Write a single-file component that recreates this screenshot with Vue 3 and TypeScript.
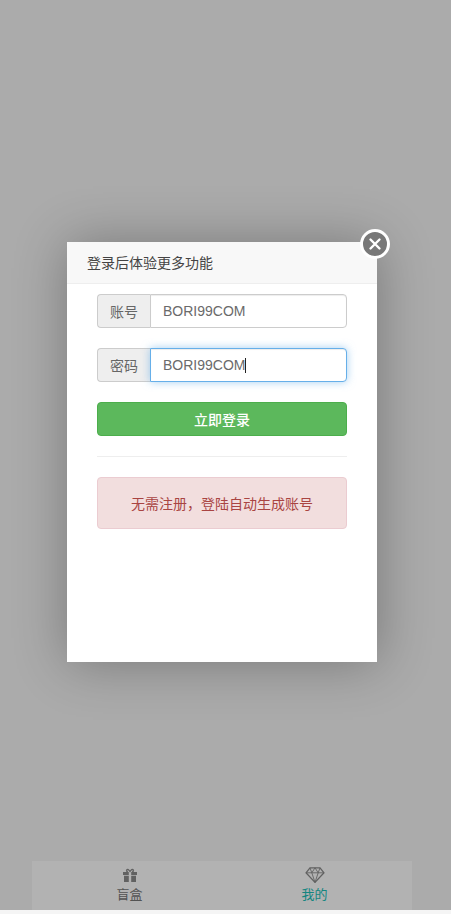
<script setup lang="ts">
import { ref } from "vue";

const account = ref<string>("BORI99COM");
const password = ref<string>("BORI99COM");
const tabs = [
  { key: "box", label: "盲盒", active: false },
  { key: "mine", label: "我的", active: true },
];
</script>

<template>
  <div class="page">
    <main class="content"></main>
    <nav class="tabbar">
      <a v-for="tab in tabs" :key="tab.key" class="tab" :class="{ active: tab.active }">
        <svg v-if="tab.key === 'box'" class="tab-icon" viewBox="0 0 16 16" width="16" height="16">
          <path d="M5.8 5C4.700 4.500 4.300 3.800 4.600 3.200 5 2.300 6.200 2.300 6.900 3.100L8 4.400 9.100 3.100C9.800 2.300 11 2.300 11.400 3.200 11.700 3.800 11.300 4.500 10.200 5" fill="none" stroke="currentColor" stroke-width="1.300"/>
          <path d="M1 5h5.800v3H1zM9.200 5H15v3H9.200zM2 8.800h4.800V15H2zM9.200 8.800H14V15H9.200z" fill="currentColor"/>
        </svg>
        <svg v-else class="tab-icon diamond" viewBox="0 0 20 16" width="20" height="16">
          <path d="M5 .8h10l4 5-9 9.600L1 5.800z" fill="none" stroke="currentColor" stroke-width="1.300" stroke-linejoin="round"/>
          <path d="M1 5.800h18M6.800 5.800l3.200 9.600 3.200-9.600M5 .8l1.800 5L10 .8l3.200 5L15 .8" fill="none" stroke="currentColor" stroke-width=".9"/>
        </svg>
        <span class="tab-label">{{ tab.label }}</span>
      </a>
    </nav>
    <div class="shade"></div>
    <section class="dialog">
      <button class="close" type="button" aria-label="关闭">
        <svg viewBox="0 0 14 14" width="14" height="14">
          <path d="M2.500 2.500l9 9M11.500 2.500l-9 9" stroke="#fff" stroke-width="2.400" stroke-linecap="round"/>
        </svg>
      </button>
      <header class="dialog-title">登录后体验更多功能</header>
      <form class="form" @submit.prevent>
        <label class="input-group">
          <span class="addon">账号</span>
          <input v-model="account" class="control" type="text" />
        </label>
        <label class="input-group">
          <span class="addon">密码</span>
          <span class="control-wrap">
            <input v-model="password" class="control focused" type="text" />
            <i class="caret"></i>
          </span>
        </label>
        <button class="submit" type="submit">立即登录</button>
        <hr class="divider" />
        <div class="alert">无需注册，登陆自动生成账号</div>
      </form>
    </section>
  </div>
</template>

<style scoped>
.page {
  position: relative;
  height: 914px;
  overflow: hidden;
  display: flex;
  flex-direction: column;
  background: #f5f5f5;
  font-family: "Liberation Sans", "Noto Sans CJK SC", sans-serif;
  font-size: 14px;
  color: #333;
}
.content {
  flex: 1;
}
.tabbar {
  width: 380px;
  height: 49px;
  margin: 0 0 4px 32px;
  padding: 0 5px;
  box-sizing: border-box;
  display: flex;
  background: #fff;
}
.tab {
  flex: 1;
  display: flex;
  flex-direction: column;
  align-items: center;
  padding-top: 6px;
  color: #777;
}
.tab-icon {
  display: block;
  color: #8c8c8c;
}
.tab-label {
  margin-top: 3px;
  font-size: 13px;
  line-height: 18px;
}
.tab.active .tab-label {
  color: #20c0b8;
}
.shade {
  position: absolute;
  left: 0;
  top: 0;
  width: 100%;
  height: 910px;
  background: rgba(0, 0, 0, 0.3);
}
.dialog {
  position: absolute;
  left: 67px;
  top: 242px;
  width: 310px;
  height: 420px;
  background: #fff;
  box-shadow: 1px 1px 50px rgba(0, 0, 0, 0.3);
}
.close {
  position: absolute;
  right: -13px;
  top: -13px;
  width: 30px;
  height: 30px;
  padding: 0;
  display: flex;
  align-items: center;
  justify-content: center;
  box-sizing: border-box;
  border: 3px solid #fff;
  border-radius: 50%;
  background: #787878;
}
.dialog-title {
  height: 41px;
  padding: 0 80px 0 20px;
  line-height: 42px;
  background: #f8f8f8;
  border-bottom: 1px solid #eee;
  color: #444;
}
.form {
  padding: 10px 30px 0;
  display: flex;
  flex-direction: column;
}
.input-group {
  display: flex;
  height: 34px;
  margin-bottom: 20px;
}
.addon {
  width: 53px;
  box-sizing: border-box;
  flex: none;
  display: flex;
  align-items: center;
  justify-content: center;
  background: #eee;
  border: 1px solid #ccc;
  border-right: 0;
  border-radius: 4px 0 0 4px;
  color: #666;
}
.control-wrap {
  position: relative;
  flex: 1;
  min-width: 0;
  display: flex;
}
.control {
  flex: 1;
  min-width: 0;
  box-sizing: border-box;
  padding: 6px 12px;
  border: 1px solid #ccc;
  border-radius: 0 4px 4px 0;
  outline: none;
  background: #fff;
  color: #6a6a6a;
  font: 14px "Liberation Sans", "Noto Sans CJK SC", sans-serif;
  box-shadow: inset 0 1px 1px rgba(0, 0, 0, 0.075);
}
.control.focused {
  border-color: #66afe9;
  box-shadow: inset 0 1px 1px rgba(0, 0, 0, 0.075), 0 0 8px rgba(102, 175, 233, 0.6);
}
.caret {
  position: absolute;
  left: 95px;
  top: 10px;
  width: 1px;
  height: 15px;
  background: #222;
}
.submit {
  height: 34px;
  padding: 0;
  border: 1px solid #4cae4c;
  border-radius: 4px;
  background: #5cb85c;
  color: #fff;
  font: 500 14px "Liberation Sans", "Noto Sans CJK SC", sans-serif;
}
.divider {
  width: 100%;
  height: 1px;
  margin: 20px 0;
  border: 0;
  background: #eee;
}
.alert {
  height: 52px;
  box-sizing: border-box;
  display: flex;
  align-items: center;
  justify-content: center;
  background: #f2dede;
  border: 1px solid #ebccd1;
  border-radius: 4px;
  color: #a94442;
}
</style>
